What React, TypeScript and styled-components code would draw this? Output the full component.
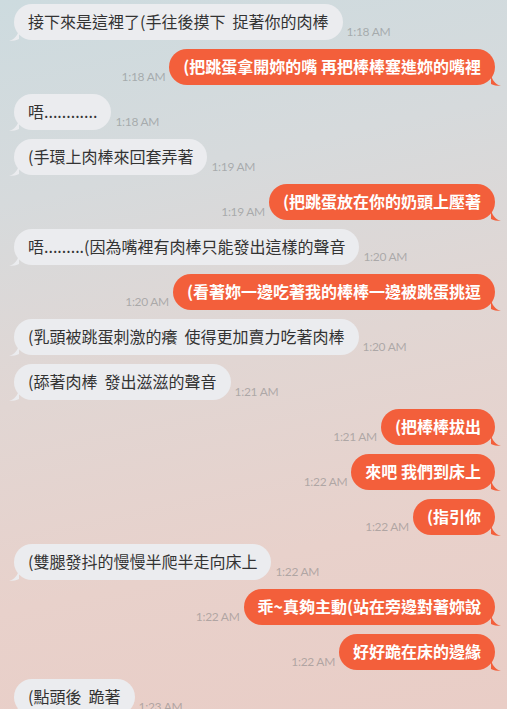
import React from "react";
import styled, { createGlobalStyle } from "styled-components";

type Side = "in" | "out";

interface IMessage {
  side: Side;
  text: string;
  time: string;
}

const messages: IMessage[] = [
  { side: "in", text: "接下來是這裡了(手往後摸下  捉著你的肉棒", time: "1:18 AM" },
  { side: "out", text: "(把跳蛋拿開妳的嘴 再把棒棒塞進妳的嘴裡", time: "1:18 AM" },
  { side: "in", text: "唔............", time: "1:18 AM" },
  { side: "in", text: "(手環上肉棒來回套弄著", time: "1:19 AM" },
  { side: "out", text: "(把跳蛋放在你的奶頭上壓著", time: "1:19 AM" },
  { side: "in", text: "唔.........(因為嘴裡有肉棒只能發出這樣的聲音", time: "1:20 AM" },
  { side: "out", text: "(看著妳一邊吃著我的棒棒一邊被跳蛋挑逗", time: "1:20 AM" },
  { side: "in", text: "(乳頭被跳蛋刺激的癢  使得更加賣力吃著肉棒", time: "1:20 AM" },
  { side: "in", text: "(舔著肉棒  發出滋滋的聲音", time: "1:21 AM" },
  { side: "out", text: "(把棒棒拔出", time: "1:21 AM" },
  { side: "out", text: "來吧 我們到床上", time: "1:22 AM" },
  { side: "out", text: "(指引你", time: "1:22 AM" },
  { side: "in", text: "(雙腿發抖的慢慢半爬半走向床上", time: "1:22 AM" },
  { side: "out", text: "乖~真夠主動(站在旁邊對著妳說", time: "1:22 AM" },
  { side: "out", text: "好好跪在床的邊緣", time: "1:22 AM" },
  { side: "in", text: "(點頭後  跪著", time: "1:23 AM" },
];

const GlobalStyle = createGlobalStyle`
  html, body {
    margin: 0;
    padding: 0;
    height: 100%;
    overflow: hidden;
  }
  body {
    font-family: "Noto Sans CJK TC", "Noto Sans", sans-serif;
  }
`;

const Chat = styled.div`
  width: 507px;
  height: 709px;
  overflow: hidden;
  box-sizing: border-box;
  padding-top: 4px;
  display: flex;
  flex-direction: column;
  gap: 9px;
  background: linear-gradient(
    168deg,
    #cddbdf 0%,
    #d6dadc 25%,
    #e1d6d3 50%,
    #e8d1cb 75%,
    #e9cdc6 100%
  );
`;

const Row = styled.div<{ $side: Side }>`
  display: flex;
  align-items: flex-end;
  gap: 4px;
  flex-direction: ${(p) => (p.$side === "out" ? "row-reverse" : "row")};
  padding: ${(p) => (p.$side === "out" ? "0 12px 0 0" : "0 0 0 14px")};
`;

const Bubble = styled.div<{ $side: Side }>`
  position: relative;
  height: 36px;
  box-sizing: border-box;
  padding: 0 14px;
  border-radius: 18px;
  font-size: 16px;
  line-height: 35px;
  white-space: pre;
  background: ${(p) => (p.$side === "out" ? "#f35f3b" : "#ebecef")};
  color: ${(p) => (p.$side === "out" ? "#ffffff" : "#333333")};
  font-weight: ${(p) => (p.$side === "out" ? 700 : 400)};

  svg {
    position: absolute;
    bottom: -1px;
    width: 10px;
    height: 12px;
    ${(p) => (p.$side === "out" ? "right: -6px;" : "left: -5px;")}
  }
`;

const Time = styled.span`
  font-family: Lato, "Liberation Sans", sans-serif;
  font-size: 12px;
  line-height: 14px;
  margin-bottom: 1px;
  color: rgba(120, 122, 124, 0.5);
  letter-spacing: -0.3px;
  white-space: nowrap;
`;

function Tail({ side }: { side: Side }) {
  const fill = side === "out" ? "#f35f3b" : "#ebecef";
  const d =
    side === "out"
      ? "M0 0 C1 6 4 10 10 12 C6 12 2 11 0 10 Z"
      : "M10 0 C9 6 6 10 0 12 C4 12 8 11 10 10 Z";
  return (
    <svg viewBox="0 0 10 12">
      <path d={d} fill={fill} />
    </svg>
  );
}

export default function App() {
  return (
    <>
      <GlobalStyle />
      <Chat>
        {messages.map((m, i) => (
          <Row key={i} $side={m.side}>
            <Bubble $side={m.side}>
              {m.text}
              <Tail side={m.side} />
            </Bubble>
            <Time>{m.time}</Time>
          </Row>
        ))}
      </Chat>
    </>
  );
}
